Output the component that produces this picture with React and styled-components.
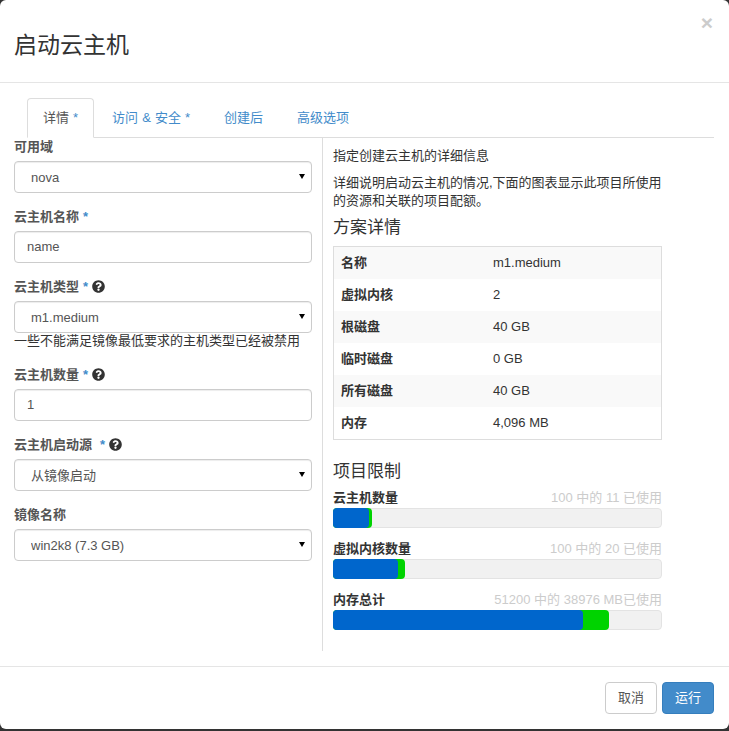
import React from "react";
import styled, { createGlobalStyle } from "styled-components";
import { FaQuestionCircle } from "react-icons/fa";

const GlobalStyle = createGlobalStyle`
  html, body {
    margin: 0;
    height: 731px;
    overflow: hidden;
    background: #333;
  }
  body {
    font-family: "Liberation Sans", "Noto Sans CJK SC", sans-serif;
    font-size: 13px;
    line-height: 18px;
    color: #333;
  }
`;

const flavor = [
  ["名称", "m1.medium"],
  ["虚拟内核", "2"],
  ["根磁盘", "40 GB"],
  ["临时磁盘", "0 GB"],
  ["所有磁盘", "40 GB"],
  ["内存", "4,096 MB"],
];

const limits = [
  { name: "云主机数量", usage: "100 中的 11 已使用", used: 36, added: 3 },
  { name: "虚拟内核数量", usage: "100 中的 20 已使用", used: 65, added: 7 },
  { name: "内存总计", usage: "51200 中的 38976 MB已使用", used: 250, added: 26 },
];

const Field = ({ label, required, help, gap, children }) => (
  <FieldWrap>
    <Label>
      {label}
      {required && <Star $gap={gap}>*</Star>}
      {help && (
        <HelpIcon>
          <FaQuestionCircle />
        </HelpIcon>
      )}
    </Label>
    {children}
  </FieldWrap>
);

const Select = ({ value }) => (
  <SelectWrap>
    <SelectBox defaultValue={value}>
      <option>{value}</option>
    </SelectBox>
    <Caret />
  </SelectWrap>
);

const App = () => {
  return (
    <>
      <GlobalStyle />
      <Modal>
        <Header>
          <Title>启动云主机</Title>
          <Close>×</Close>
        </Header>

        <TabBar>
          <Tab $active>
            详情<TabStar>*</TabStar>
          </Tab>
          <Tab>
            访问 <Amp>&amp;</Amp> 安全<TabStar>*</TabStar>
          </Tab>
          <Tab>创建后</Tab>
          <Tab>高级选项</Tab>
        </TabBar>

        <Body>
          <FormCol>
            <Field label="可用域">
              <Select value="nova" />
            </Field>
            <Field label="云主机名称" required>
              <TextInput defaultValue="name" />
            </Field>
            <Field label="云主机类型" required help>
              <Select value="m1.medium" />
              <HelpText>一些不能满足镜像最低要求的主机类型已经被禁用</HelpText>
            </Field>
            <Field label="云主机数量" required help>
              <TextInput defaultValue="1" />
            </Field>
            <Field label="云主机启动源" required help gap={8}>
              <Select value="从镜像启动" />
            </Field>
            <Field label="镜像名称">
              <Select value="win2k8 (7.3 GB)" />
            </Field>
          </FormCol>

          <InfoCol>
            <Intro>指定创建云主机的详细信息</Intro>
            <Desc>详细说明启动云主机的情况,下面的图表显示此项目所使用的资源和关联的项目配额。</Desc>
            <Heading>方案详情</Heading>
            <FlavorTable>
              <tbody>
                {flavor.map(([k, v]) => (
                  <tr key={k}>
                    <th>{k}</th>
                    <td>{v}</td>
                  </tr>
                ))}
              </tbody>
            </FlavorTable>
            <LimitHeading>项目限制</LimitHeading>
            {limits.map((l) => (
              <Limit key={l.name}>
                <LimitTop>
                  <strong>{l.name}</strong>
                  <Usage>{l.usage}</Usage>
                </LimitTop>
                <Track>
                  <BarAdded style={{ width: l.used + l.added }} />
                  <BarUsed style={{ width: l.used }} />
                </Track>
              </Limit>
            ))}
          </InfoCol>
        </Body>

        <Footer>
          <Button>取消</Button>
          <Button $primary>运行</Button>
        </Footer>
      </Modal>
    </>
  );
};

const Modal = styled.div`
  width: 729px;
  height: 729px;
  background: #fff;
  border-radius: 6px;
  display: flex;
  flex-direction: column;
  overflow: hidden;
`;

const Header = styled.div`
  height: 83px;
  box-sizing: border-box;
  border-bottom: 1px solid #e5e5e5;
  padding: 0 16px 0 14px;
  display: flex;
  justify-content: space-between;
  align-items: flex-start;
`;

const Title = styled.h3`
  margin: 30px 0 0;
  font-size: 23px;
  font-weight: 400;
  line-height: 30px;
  color: #333;
`;

const Close = styled.span`
  margin-top: 12px;
  font-size: 21px;
  font-weight: 700;
  line-height: 21px;
  color: #ccc;
`;

const TabBar = styled.ul`
  list-style: none;
  display: flex;
  gap: 2px;
  margin: 15px 15px 0 27px;
  padding: 0;
  height: 40px;
  box-sizing: border-box;
  border-bottom: 1px solid #ddd;
`;

const Tab = styled.li`
  height: 40px;
  flex: none;
  box-sizing: border-box;
  padding: 10px 15px;
  border: 1px solid ${(p) => (p.$active ? "#ddd" : "transparent")};
  border-bottom-color: ${(p) => (p.$active ? "#fff" : "transparent")};
  border-radius: 4px 4px 0 0;
  background: ${(p) => (p.$active ? "#fff" : "transparent")};
  color: ${(p) => (p.$active ? "#555" : "#428bca")};
  white-space: pre;
`;

const Amp = styled.span`
  margin: 0 0.5px;
`;

const TabStar = styled.span`
  margin-left: 4px;
  color: #428bca;
`;

const Body = styled.div`
  display: flex;
  height: 513px;
  margin: 0 15px 15px 14px;
  gap: 10px;
`;

const FormCol = styled.div`
  width: 298px;
  flex: none;
  margin-top: -1px;
`;

const FieldWrap = styled.div`
  margin-bottom: 14px;
`;

const Label = styled.label`
  display: flex;
  align-items: center;
  height: 20px;
  margin-bottom: 4px;
  font-weight: 700;
  color: #555;
`;

const Star = styled.span`
  margin-left: ${(p) => p.$gap || 4}px;
  color: #428bca;
`;

const HelpIcon = styled.span`
  display: inline-flex;
  margin: -1px 0 0 4px;
  font-size: 13px;
  color: #333;
`;

const SelectWrap = styled.div`
  position: relative;
`;

const SelectBox = styled.select`
  display: block;
  width: 100%;
  height: 32px;
  box-sizing: border-box;
  padding: 2px 16px 0;
  appearance: none;
  background: #fff;
  border: 1px solid #ccc;
  border-radius: 4px;
  box-shadow: inset 0 1px 1px rgba(0, 0, 0, 0.075);
  font: inherit;
  color: #555;
`;

const Caret = styled.span`
  position: absolute;
  right: 7px;
  top: 13px;
  border-left: 3px solid transparent;
  border-right: 3px solid transparent;
  border-top: 5px solid #000;
`;

const TextInput = styled.input`
  display: block;
  width: 100%;
  height: 32px;
  box-sizing: border-box;
  padding: 0 12px 2px;
  background: #fff;
  border: 1px solid #ccc;
  border-radius: 4px;
  box-shadow: inset 0 1px 1px rgba(0, 0, 0, 0.075);
  font: inherit;
  color: #555;
`;

const HelpText = styled.div`
  line-height: 18px;
  margin-top: -1px;
  padding-bottom: 1px;
  color: #333;
`;

const InfoCol = styled.div`
  flex: none;
  width: 329px;
  box-sizing: content-box;
  border-left: 1px solid #ddd;
  padding-left: 10px;
`;

const Intro = styled.p`
  margin: 9px 0 9px;
`;

const Desc = styled.p`
  margin: 0;
`;

const Heading = styled.h4`
  margin: 8px 0 8px;
  font-size: 17px;
  font-weight: 400;
  line-height: 20px;
  color: #333;
`;

const LimitHeading = styled(Heading)`
  margin: 22px 0 7px;
`;

const FlavorTable = styled.table`
  width: 100%;
  border: 1px solid #ddd;
  border-collapse: collapse;
  th, td {
    height: 32px;
    padding: 0 7px;
    text-align: left;
    color: #333;
  }
  th {
    width: 138px;
    font-weight: 700;
  }
  tr:nth-child(odd) {
    background: #f9f9f9;
  }
`;

const Limit = styled.div`
  margin-bottom: 12px;
`;

const LimitTop = styled.div`
  display: flex;
  justify-content: space-between;
  align-items: center;
  height: 18px;
  margin-bottom: 1px;
  color: #333;
`;

const Usage = styled.span`
  color: #ccc;
`;

const Track = styled.div`
  position: relative;
  height: 20px;
  box-sizing: border-box;
  background: #f1f1f1;
  border: 1px solid #e3e3e3;
  border-radius: 4px;
`;

const BarUsed = styled.div`
  position: absolute;
  left: -1px;
  top: -1px;
  height: 20px;
  background: #0066cc;
  border-radius: 4px;
`;

const BarAdded = styled(BarUsed)`
  background: #00d300;
`;

const Footer = styled.div`
  flex: 1;
  border-top: 1px solid #e5e5e5;
  padding: 15px;
  display: flex;
  justify-content: flex-end;
  align-items: flex-start;
  gap: 5px;
`;

const Button = styled.button`
  width: 52px;
  height: 32px;
  padding: 0;
  border-radius: 4px;
  font: inherit;
  border: 1px solid ${(p) => (p.$primary ? "#357ebd" : "#ccc")};
  background: ${(p) => (p.$primary ? "#428bca" : "#fff")};
  color: ${(p) => (p.$primary ? "#fff" : "#555")};
`;

export default App;
